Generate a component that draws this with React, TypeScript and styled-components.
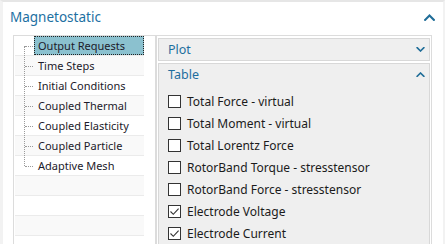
import React from "react";
import styled, { createGlobalStyle } from "styled-components";

const GlobalStyle = createGlobalStyle`
  html, body {
    margin: 0;
    padding: 0;
    background: #ffffff;
  }
  body {
    font-family: "Noto Sans", "Open Sans", sans-serif;
    -webkit-font-smoothing: antialiased;
  }
`;

const treeItems = [
  "Output Requests",
  "Time Steps",
  "Initial Conditions",
  "Coupled Thermal",
  "Coupled Elasticity",
  "Coupled Particle",
  "Adaptive Mesh",
];

const outputs = [
  { label: "Total Force - virtual", checked: false },
  { label: "Total Moment - virtual", checked: false },
  { label: "Total Lorentz Force", checked: false },
  { label: "RotorBand Torque - stresstensor", checked: false },
  { label: "RotorBand Force - stresstensor", checked: false },
  { label: "Electrode Voltage", checked: true },
  { label: "Electrode Current", checked: true },
];

function Chevron({ up, size = 9 }: { up?: boolean; size?: number }) {
  const h = Math.round(size * 0.6);
  return (
    <svg width={size} height={h} viewBox="0 0 10 6" fill="none">
      <path
        d={up ? "M1 5.2 L5 1.2 L9 5.2" : "M1 0.8 L5 4.8 L9 0.8"}
        stroke="#1f6d98"
        strokeWidth="1.9"
        strokeLinecap="square"
      />
    </svg>
  );
}

function CheckMark() {
  return (
    <svg width="11" height="11" viewBox="0 0 11 11" fill="none">
      <path d="M1.5 5.5 L4.3 8.3 L9.6 2.6" stroke="#333" strokeWidth="1.1" />
    </svg>
  );
}

export default function App() {
  const emptyRows = 4;
  return (
    <>
      <GlobalStyle />
      <Frame>
        <Header>
          <Title>Magnetostatic</Title>
          <Chevron up size={11} />
        </Header>
        <Body>
          <Tree>
            <TreeRows>
              {treeItems.map((name, i) => (
                <TreeRow key={name} $odd={i % 2 === 1}>
                  <Guide $first={i === 0} $last={i === treeItems.length - 1} />
                  <TreeLabel $selected={i === 0}>{name}</TreeLabel>
                </TreeRow>
              ))}
              {Array.from({ length: emptyRows }).map((_, i) => (
                <TreeRow key={"e" + i} $odd={(treeItems.length + i) % 2 === 1} />
              ))}
            </TreeRows>
          </Tree>
          <Panel>
            <Section>
              <SectionHeader>
                <span>Plot</span>
                <Chevron />
              </SectionHeader>
            </Section>
            <Section $grow>
              <SectionHeader>
                <span>Table</span>
                <Chevron up />
              </SectionHeader>
              <CheckList>
                {outputs.map((o) => (
                  <CheckRow key={o.label}>
                    <Box>{o.checked && <CheckMark />}</Box>
                    <span>{o.label}</span>
                  </CheckRow>
                ))}
              </CheckList>
            </Section>
          </Panel>
        </Body>
      </Frame>
    </>
  );
}

const Frame = styled.div`
  width: 445px;
  height: 244px;
  box-sizing: border-box;
  border-top: 2px solid #e6e6e6;
  border-left: 3px solid #f2f2f2;
  border-right: 2px solid #f2f2f2;
  background: #ffffff;
  display: flex;
  flex-direction: column;
  overflow: hidden;
`;

const Header = styled.div`
  height: 33px;
  flex: none;
  display: flex;
  align-items: center;
  justify-content: space-between;
  padding: 0 8px 0 7px;
  svg {
    margin-top: -3px;
  }
`;

const Title = styled.div`
  font-size: 13.5px;
  color: #1d70a2;
  margin-top: -4px;
`;

const Body = styled.div`
  flex: 1;
  display: flex;
  padding: 0 11px 0 10px;
  min-height: 0;
`;

const Tree = styled.div`
  width: 143px;
  box-sizing: border-box;
  border: 1px solid #dcdcdc;
  border-bottom: none;
  padding: 0 11px 0 1px;
  background: #ffffff;
`;

const TreeRows = styled.div`
  display: flex;
  flex-direction: column;
`;

const TreeRow = styled.div<{ $odd?: boolean }>`
  height: 20px;
  flex: none;
  box-sizing: border-box;
  border-bottom: 1px solid #ebebeb;
  background: ${(p) => (p.$odd ? "#f9f9f9" : "#ffffff")};
  display: flex;
  align-items: stretch;
`;

const Guide = styled.span<{ $first?: boolean; $last?: boolean }>`
  width: 19px;
  flex: none;
  position: relative;
  &::before {
    content: "";
    position: absolute;
    left: 9px;
    top: ${(p) => (p.$first ? "10px" : "-1px")};
    bottom: ${(p) => (p.$last ? "9px" : "-1px")};
    border-left: 1px dotted #9a9a9a;
  }
  &::after {
    content: "";
    position: absolute;
    left: 10px;
    width: 8px;
    top: 10px;
    border-top: 1px dotted #9a9a9a;
  }
`;

const TreeLabel = styled.span<{ $selected?: boolean }>`
  flex: 1;
  box-sizing: border-box;
  font-size: 11px;
  color: #1c1a2a;
  padding-left: 3px;
  display: flex;
  align-items: center;
  white-space: nowrap;
  background: ${(p) => (p.$selected ? "#8bc1cf" : "transparent")};
  border: 1px dotted ${(p) => (p.$selected ? "#222" : "transparent")};
`;

const Panel = styled.div`
  flex: 1;
  box-sizing: border-box;
  border: 1px solid #dcdcdc;
  border-bottom: none;
  padding: 2px 1px 0 1px;
  display: flex;
  flex-direction: column;
  gap: 2px;
  background: #ffffff;
`;

const Section = styled.div<{ $grow?: boolean }>`
  border: 1px solid #d8d8d8;
  border-bottom: ${(p) => (p.$grow ? "none" : "1px solid #d8d8d8")};
  background: #efefef;
  flex: ${(p) => (p.$grow ? 1 : "none")};
  display: flex;
  flex-direction: column;
`;

const SectionHeader = styled.div`
  height: 21px;
  display: flex;
  align-items: center;
  justify-content: space-between;
  padding: 0 4px 0 9px;
  font-size: 12.5px;
  color: #1e6e9e;
`;

const CheckList = styled.div`
  padding: 5px 0 0 9px;
  display: flex;
  flex-direction: column;
`;

const CheckRow = styled.div`
  height: 22px;
  display: flex;
  align-items: center;
  gap: 6px;
  font-size: 12px;
  color: #1b1b1b;
  white-space: nowrap;
`;

const Box = styled.span`
  width: 13px;
  height: 13px;
  box-sizing: border-box;
  border: 1px solid #333333;
  background: #ffffff;
  display: flex;
  align-items: center;
  justify-content: center;
`;
